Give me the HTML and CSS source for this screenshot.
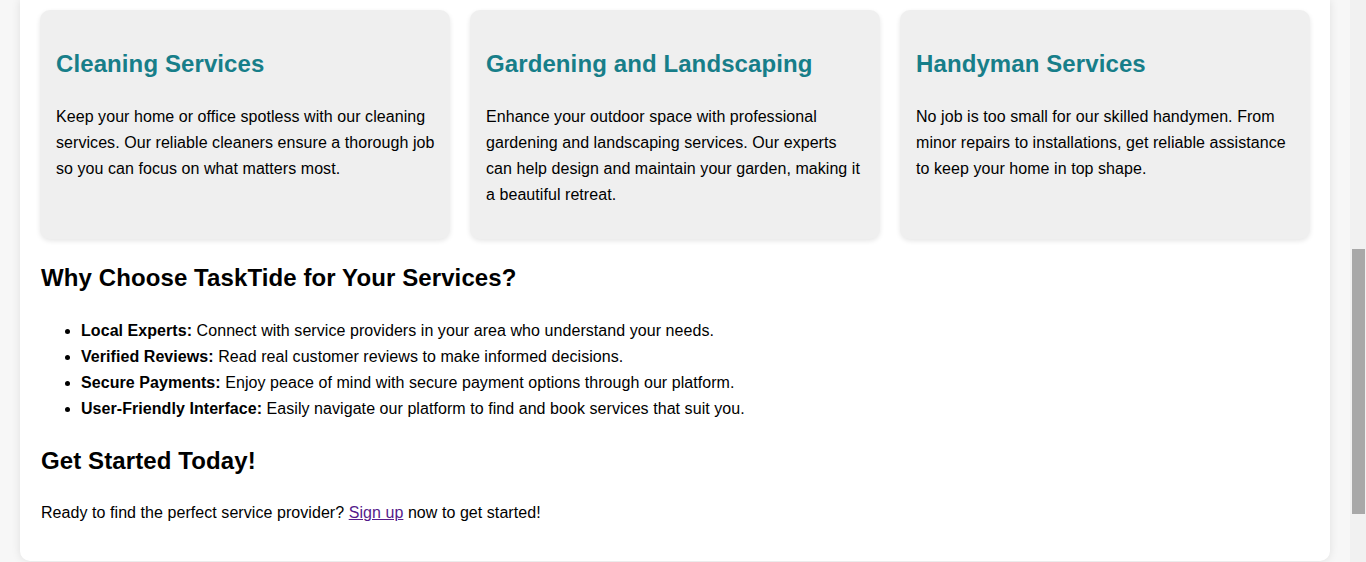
FILE: index.html
```html
<!DOCTYPE html>
<html lang="en">
<head>
<meta charset="utf-8">
<title>TaskTide – Services</title>
<link rel="stylesheet" href="styles.css">
</head>
<body>
<div class="page">
  <main class="container">
    <section class="cards">
      <article class="card">
        <h2>Cleaning Services</h2>
        <p>Keep your home or office spotless with our cleaning services. Our reliable cleaners ensure a thorough job so you can focus on what matters most.</p>
      </article>
      <article class="card">
        <h2>Gardening and Landscaping</h2>
        <p>Enhance your outdoor space with professional gardening and landscaping services. Our experts can help design and maintain your garden, making it a beautiful retreat.</p>
      </article>
      <article class="card">
        <h2>Handyman Services</h2>
        <p>No job is too small for our skilled handymen. From minor repairs to installations, get reliable assistance to keep your home in top shape.</p>
      </article>
    </section>
    <h2>Why Choose TaskTide for Your Services?</h2>
    <ul>
      <li><strong>Local Experts:</strong> Connect with service providers in your area who understand your needs.</li>
      <li><strong>Verified Reviews:</strong> Read real customer reviews to make informed decisions.</li>
      <li><strong>Secure Payments:</strong> Enjoy peace of mind with secure payment options through our platform.</li>
      <li><strong>User-Friendly Interface:</strong> Easily navigate our platform to find and book services that suit you.</li>
    </ul>
    <h2>Get Started Today!</h2>
    <p>Ready to find the perfect service provider? <a href="#signup" class="visited">Sign up</a> now to get started!</p>
  </main>
</div>
<div class="scrollbar"><div class="thumb"></div></div>
</body>
</html>
```

FILE: styles.css
```css
html, body {
  margin: 0;
  height: 562px;
  overflow: hidden;
}
body {
  display: flex;
  font-family: "Liberation Sans", Arial, sans-serif;
  font-size: 16px;
  line-height: 26px;
  letter-spacing: 0.06px;
  color: #000;
  background: #f7f7f7;
}
.page {
  flex: 1;
  padding: 0 20px;
  min-width: 0;
}
.container {
  background: #fff;
  padding: 10px 20px 19px 21px;
  border-radius: 0 0 10px 10px;
  box-shadow: 0 0 10px rgba(0, 0, 0, 0.1);
}
h2 {
  font-size: 24px;
  line-height: 37px;
  padding-bottom: 2px;
  letter-spacing: 0.1px;
  margin: 0.83em 0;
}
.cards {
  display: grid;
  grid-template-columns: repeat(3, 1fr);
  gap: 20px;
  margin-left: -1px;
}
.card {
  background: #efefef;
  padding: 15px 15px 15px 16px;
  border-radius: 10px;
  box-shadow: 0 2px 5px rgba(0, 0, 0, 0.1);
}
.card h2 {
  color: #177e89;
}
ul {
  margin: 16px 0;
  padding-left: 40px;
}
p {
  margin: 16px 0;
}
a.visited {
  color: #551a8b;
}
.scrollbar {
  width: 16px;
  flex: none;
  background: #f1f1f1;
  display: flex;
  flex-direction: column;
  padding: 249px 1px 0 2px;
  box-sizing: border-box;
}
.thumb {
  height: 265px;
  background: #a8a8a8;
}
```
